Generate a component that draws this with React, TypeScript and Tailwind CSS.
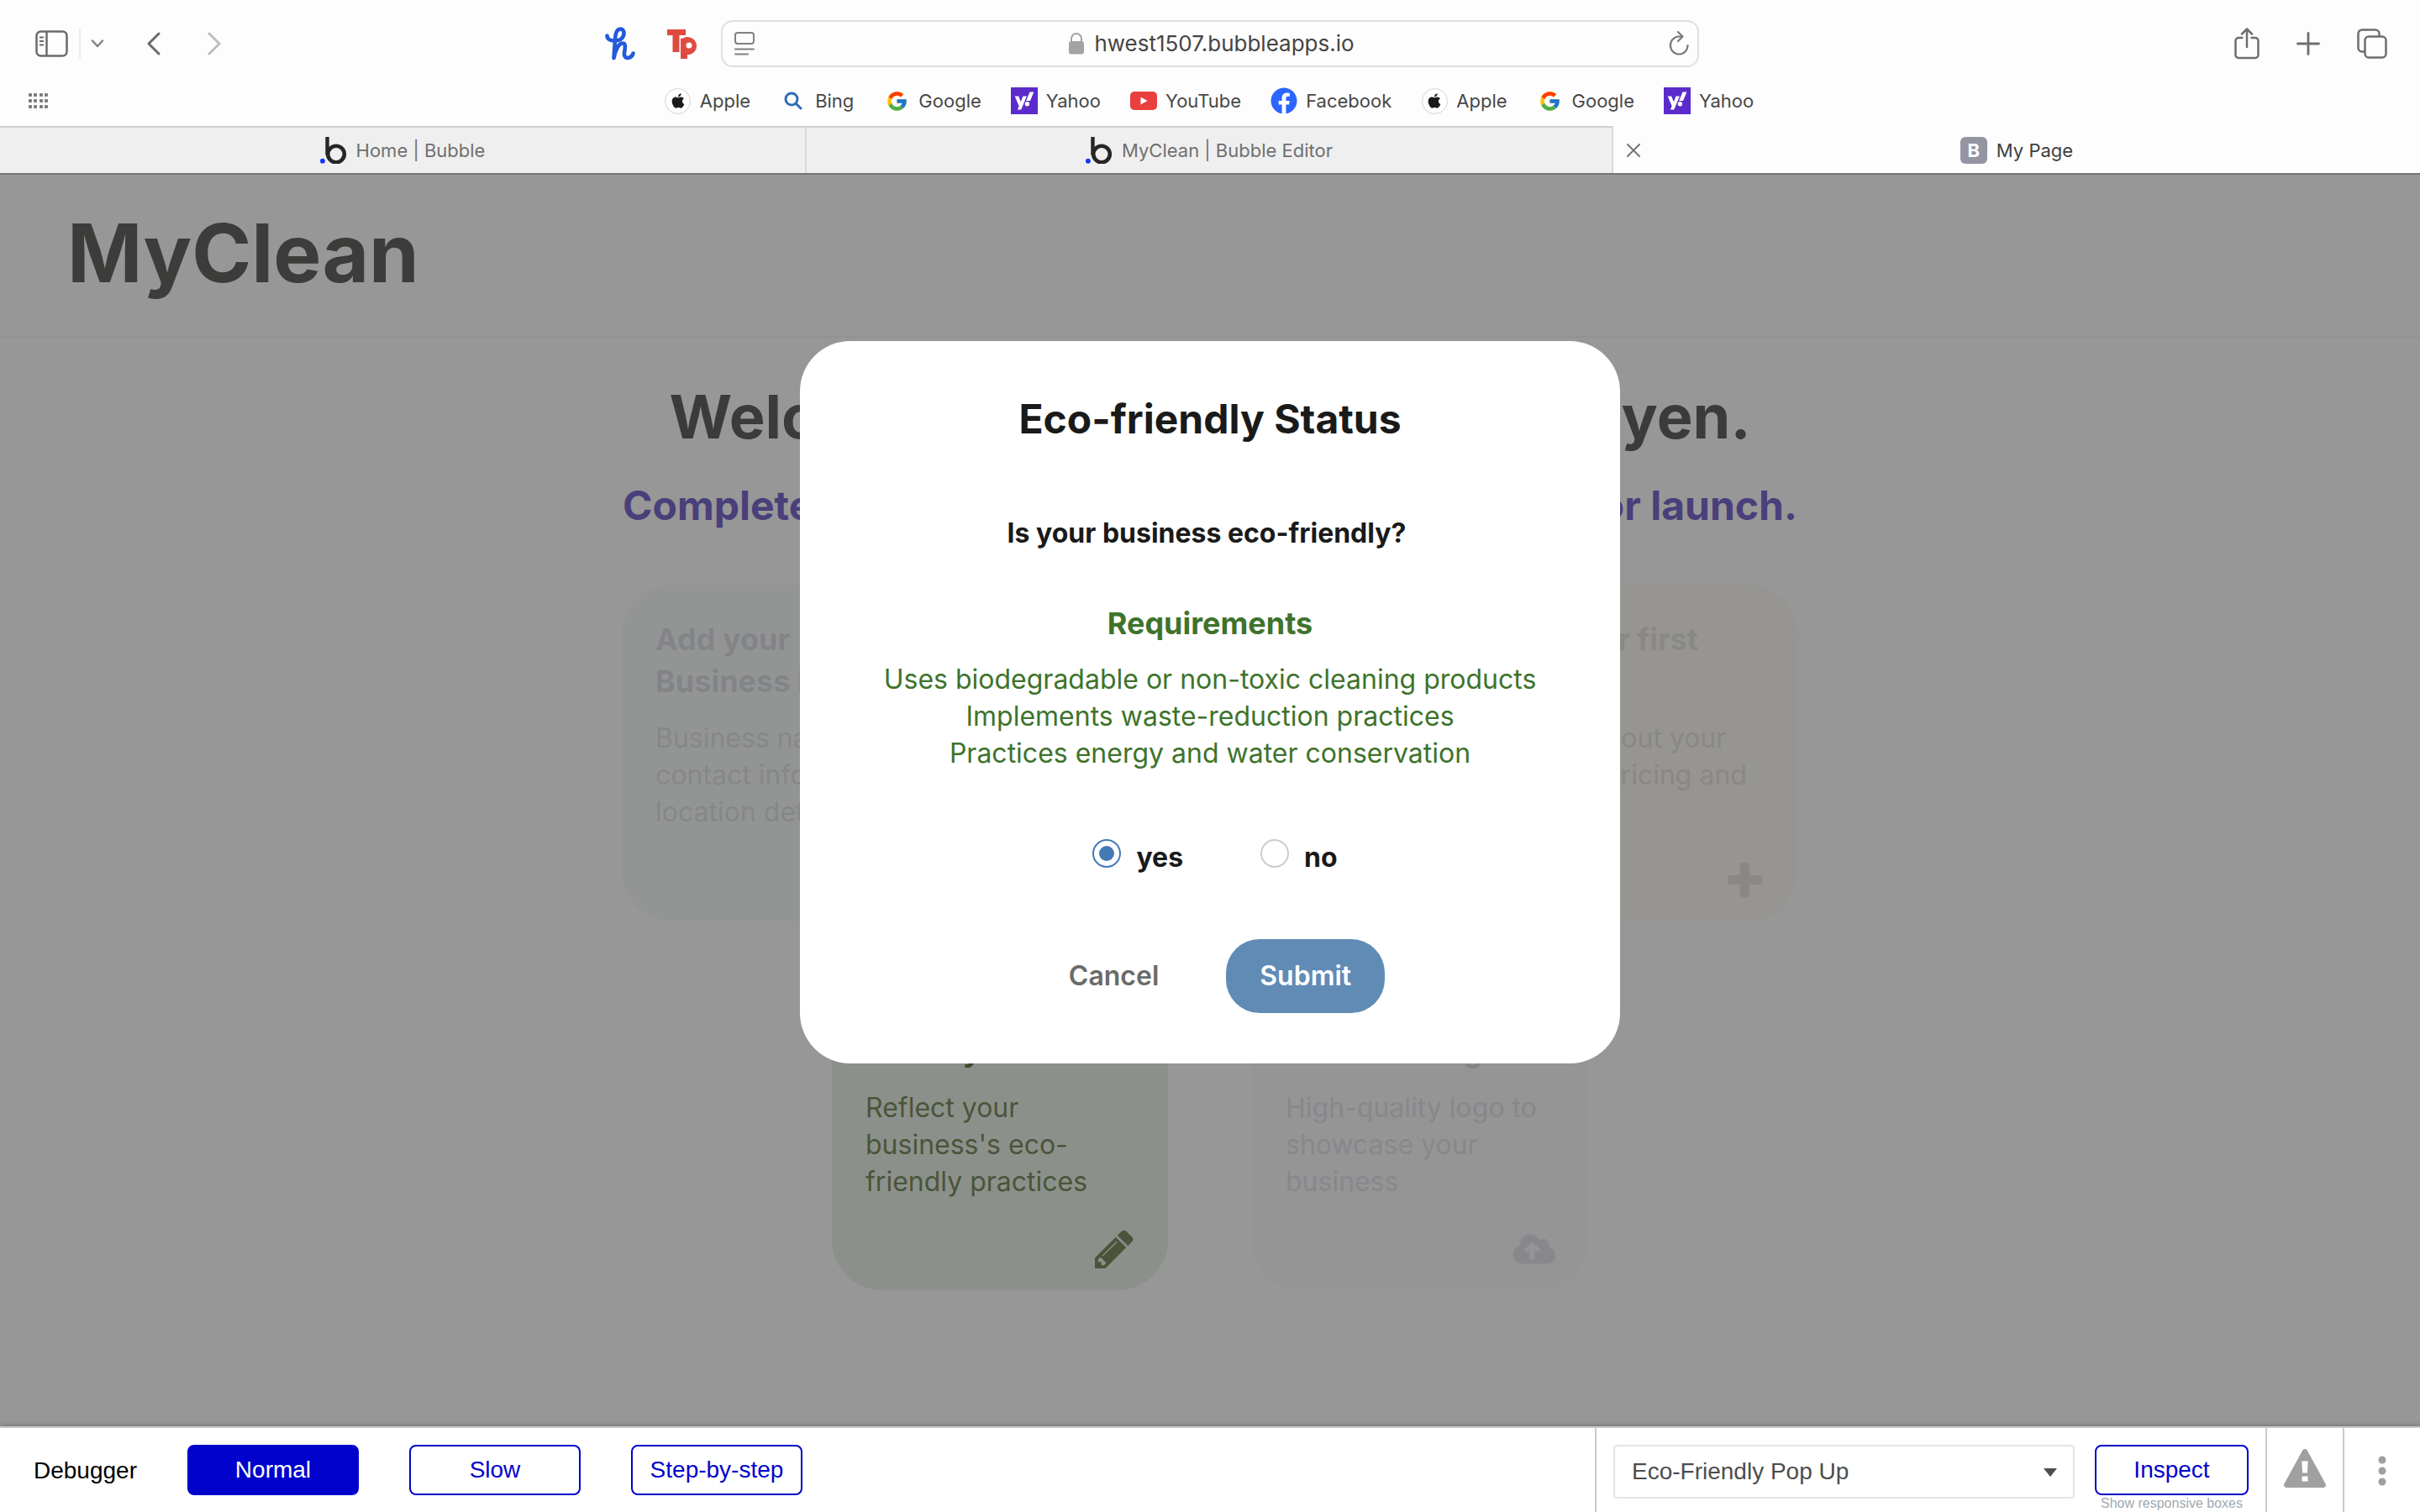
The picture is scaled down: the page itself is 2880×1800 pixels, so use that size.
import { useState, type ReactNode } from "react";
import { FaApple, FaFacebook, FaYahoo } from "react-icons/fa";
import { FcGoogle } from "react-icons/fc";

const ui = "font-['Inter',sans-serif]";
const helvetica = "font-['Liberation_Sans',Arial,sans-serif]";

function SidebarIcon() {
  return (
    <svg width="40" height="32" viewBox="0 0 40 32" fill="none" stroke="#6b6b6b" strokeWidth="2.500">
      <rect x="1.500" y="1.500" width="36" height="29" rx="5" />
      <path d="M13.500 1.500v29" />
      <path d="M5 8.500h5M5 13h5M5 17.500h5" strokeWidth="2" />
    </svg>
  );
}

function HoneyIcon() {
  return (
    <svg width="36" height="40" viewBox="0 0 36 40" fill="none" stroke="#2459dc" strokeWidth="4.600" strokeLinecap="round" strokeLinejoin="round">
      <path d="M2.500 10.500C2.500 14 6 16.500 11 16.500C18.500 16.500 22.500 12.500 22.500 7.500C22.500 4.500 21 2.500 18.500 2.500C13.500 2.500 12.300 9 12 15L10.500 37C12.500 27 16.500 19.500 21 19.500C26.500 19.500 22.500 29 23 33.500C23.500 38.500 31.500 38 33.500 31.500" />
    </svg>
  );
}

function TpIcon() {
  return (
    <svg width="36" height="36" viewBox="0 0 36 36">
      <g fill="#df4b41">
        <path d="M0 1h22v7h-7.500v20h-8V8H0z" />
        <path fillRule="evenodd" d="M17 12l6-2c7 0 12 4.500 12 10.500s-4 10-9.500 10.500H24v5h-8V12zM26 16.500a3.500 3.500 0 1 0 0 7a3.500 3.500 0 1 0 0-7z" />
      </g>
    </svg>
  );
}

function ReaderIcon() {
  return (
    <svg width="24" height="28" viewBox="0 0 24 28" fill="none" stroke="#808080" strokeWidth="2" strokeLinecap="round">
      <rect x="1" y="1" width="22" height="13" rx="3" />
      <path d="M1 20.500h22M1 26.500h15" />
    </svg>
  );
}

function LockIcon() {
  return (
    <svg width="18" height="26" viewBox="0 0 18 26">
      <rect x="0" y="10" width="18" height="15.500" rx="3" fill="#a3a3a3" />
      <path d="M3 11V7a6 6 0 0 1 12 0v4" fill="none" stroke="#a3a3a3" strokeWidth="2" />
    </svg>
  );
}

function ReloadIcon() {
  return (
    <svg width="24" height="30" viewBox="0 0 24 30" fill="none" stroke="#7a7a7a" strokeWidth="2.200" strokeLinecap="round" strokeLinejoin="round">
      <path d="M22.500 17a10.300 10.500 0 1 1-10.300-10.500h4" />
      <path d="M11 1l5.500 5.500l-5.500 5.500" />
    </svg>
  );
}

function ShareIcon() {
  return (
    <svg width="30" height="38" viewBox="0 0 30 38" fill="none" stroke="#6e6e6e" strokeWidth="2.500" strokeLinecap="round" strokeLinejoin="round">
      <path d="M9.500 12H5a3.500 3.500 0 0 0-3.500 3.500v17A3.500 3.500 0 0 0 5 36h20a3.500 3.500 0 0 0 3.500-3.500v-17A3.500 3.500 0 0 0 25 12h-4.500" />
      <path d="M15 23V2M9 7.500L15 1.500l6 6" />
    </svg>
  );
}

function TabsIcon() {
  return (
    <svg width="36" height="36" viewBox="0 0 36 36" fill="none" stroke="#6e6e6e" strokeWidth="2.500" strokeLinejoin="round">
      <path d="M9 27.500H6a4.500 4.500 0 0 1-4.500-4.500V6A4.500 4.500 0 0 1 6 1.500h16A4.500 4.500 0 0 1 26.500 6v3" />
      <rect x="9.500" y="9.500" width="25" height="25" rx="4.500" />
    </svg>
  );
}

function BubbleIcon() {
  return (
    <svg width="32" height="32" viewBox="0 0 32 32">
      <path d="M8.500 0v21.500" stroke="#262626" strokeWidth="4.400" fill="none" />
      <circle cx="19" cy="20.500" r="9.800" fill="none" stroke="#262626" strokeWidth="4.600" />
      <circle cx="2.900" cy="28.700" r="2.900" fill="#1034ff" />
    </svg>
  );
}

function BingIcon() {
  return (
    <svg width="22" height="22" viewBox="0 0 22 22" fill="none" stroke="#2f6db8" strokeWidth="3" strokeLinecap="round">
      <circle cx="9" cy="9" r="7" />
      <path d="M14 14l6 6" />
    </svg>
  );
}

function YouTubeIcon() {
  return (
    <svg width="32" height="22" viewBox="0 0 32 22">
      <rect width="32" height="22" rx="5" fill="#ea3f3f" />
      <path d="M12.500 6.500v9l8-4.500z" fill="#fff" />
    </svg>
  );
}

const bookmarkIcons: Record<string, ReactNode> = {
  Apple: (
    <span className="flex size-[31px] items-center justify-center rounded-full border border-[#d4d4d4] bg-white">
      <FaApple className="size-5 text-[#1a1a1a]" />
    </span>
  ),
  Bing: <BingIcon />,
  Google: <FcGoogle className="size-[27px]" />,
  Yahoo: (
    <span className="flex size-8 items-center justify-center bg-[#5b2bcb]">
      <FaYahoo className="size-6 text-white" />
    </span>
  ),
  YouTube: <YouTubeIcon />,
  Facebook: <FaFacebook className="size-8 text-[#2a66ff]" />,
};

const bookmarks = ["Apple", "Bing", "Google", "Yahoo", "YouTube", "Facebook", "Apple", "Google", "Yahoo"];

function BrowserChrome() {
  return (
    <header className={`bg-[#fdfdfd] ${ui}`}>
      <div className="grid grid-cols-[1fr_1164px_1fr] pt-6">
        <div className="flex items-center pr-7 pl-[42px]">
          <button aria-label="Show sidebar"><SidebarIcon /></button>
          <span className="ml-3 h-9 w-0.5 bg-[#ececec]" />
          <button aria-label="Tab groups" className="ml-3">
            <svg width="16" height="10" viewBox="0 0 16 10" fill="none" stroke="#828282" strokeWidth="2.500" strokeLinecap="round" strokeLinejoin="round">
              <path d="M2 1.500l6 6.500l6-6.500" />
            </svg>
          </button>
          <button aria-label="Back" className="ml-[50px]">
            <svg width="18" height="28" viewBox="0 0 18 28" fill="none" stroke="#6b6b6b" strokeWidth="3" strokeLinecap="round" strokeLinejoin="round">
              <path d="M15 2L3 14l12 12" />
            </svg>
          </button>
          <button aria-label="Forward" className="ml-[54px]">
            <svg width="18" height="28" viewBox="0 0 18 28" fill="none" stroke="#bdbdbd" strokeWidth="3" strokeLinecap="round" strokeLinejoin="round">
              <path d="M3 2l12 12L3 26" />
            </svg>
          </button>
          <div className="ml-auto flex items-center gap-[38px]">
            <button aria-label="Honey"><HoneyIcon /></button>
            <button aria-label="Tp extension"><TpIcon /></button>
          </div>
        </div>
        <div className="flex h-14 items-center justify-between rounded-[14px] border-2 border-[#e0e0e0] pr-2.5 pl-3.5">
          <button aria-label="Reader"><ReaderIcon /></button>
          <div className="flex items-center gap-3">
            <LockIcon />
            <input
              aria-label="Address"
              defaultValue="hwest1507.bubbleapps.io"
              className="field-sizing-content bg-transparent text-[26px] leading-8 text-[#454545] outline-none"
            />
          </div>
          <button aria-label="Reload"><ReloadIcon /></button>
        </div>
        <div className="flex items-center justify-end gap-11 pr-[39px]">
          <button aria-label="Share"><ShareIcon /></button>
          <button aria-label="New tab">
            <svg width="28" height="28" viewBox="0 0 28 28" stroke="#6e6e6e" strokeWidth="2.800" strokeLinecap="round">
              <path d="M14 1.500v25M1.500 14h25" />
            </svg>
          </button>
          <button aria-label="Show tabs"><TabsIcon /></button>
        </div>
      </div>
      <nav className="grid grid-cols-[1fr_auto_1fr] items-center pr-9 pl-[34px] pt-6 pb-3.5">
        <button aria-label="Favorites" className="justify-self-start">
          <svg width="24" height="18" viewBox="0 0 24 18" fill="#7d7d7d">
            {[0, 7, 14].map((y) => [0, 6, 13, 19].map((x) => <rect key={`${x}-${y}`} x={x} y={y} width="4" height="4" rx="1" />))}
          </svg>
        </button>
        <div className="flex items-center gap-[35px]">
          {bookmarks.map((name, i) => (
            <a key={i} href="#" className="flex items-center gap-2.5 text-[22px] leading-8 text-[#474747]">
              <span className="flex size-8 items-center justify-center">{bookmarkIcons[name]}</span>
              {name}
            </a>
          ))}
        </div>
      </nav>
      <div className="grid h-14 grid-cols-3 text-[22px] leading-8">
        <button className="flex items-center justify-center gap-[11px] border-t-2 border-r-2 border-t-[#cfcfcf] border-r-[#dadada] bg-[#efefef] text-[#707070]">
          <BubbleIcon />
          Home | Bubble
        </button>
        <button className="flex items-center justify-center gap-[11px] border-t-2 border-r-2 border-t-[#cfcfcf] border-r-[#dadada] bg-[#efefef] text-[#707070]">
          <BubbleIcon />
          MyClean | Bubble Editor
        </button>
        <div className="grid grid-cols-[1fr_auto_1fr] items-center border-t-2 border-[#fdfdfd] px-4 text-[#404040]">
          <button aria-label="Close tab" className="justify-self-start">
            <svg width="16" height="16" viewBox="0 0 16 16" stroke="#757575" strokeWidth="2" strokeLinecap="round">
              <path d="M1 1l14 14M15 1L1 15" />
            </svg>
          </button>
          <button className="flex items-center gap-[11px]">
            <span className="flex size-8 items-center justify-center rounded-md bg-[#9495a2] text-[22px] font-bold text-white">B</span>
            My Page
          </button>
        </div>
      </div>
    </header>
  );
}

function PlusIcon() {
  return (
    <svg width="41" height="41" viewBox="0 0 1408 1408" fill="currentColor">
      <path d="M1408 608v192q0 40-28 68t-68 28h-416v416q0 40-28 68t-68 28h-192q-40 0-68-28t-28-68v-416h-416q-40 0-68-28t-28-68v-192q0-40 28-68t68-28h416v-416q0-40 28-68t68-28h192q40 0 68 28t28 68v416h416q40 0 68 28t28 68z" />
    </svg>
  );
}

function PencilIcon() {
  return (
    <svg width="46" height="46" viewBox="0 0 1536 1536" fill="currentColor">
      <path d="M363 1408l91-91-235-235-91 91v107h128v128h107zM886 480q0-22-22-22-10 0-17 7l-542 542q-7 7-7 17 0 22 22 22 10 0 17-7l542-542q7-7 7-17zM832 288l416 416-832 832h-416v-416zM1515 384q0 53-37 90l-166 166-416-416 166-165q36-38 90-38 53 0 91 38l235 234q37 39 37 91z" />
    </svg>
  );
}

function CloudUploadIcon() {
  return (
    <svg width="52" height="40" viewBox="0 0 640 512" fill="currentColor" className="shrink-0">
      <path d="M537.600 226.600c4.100-10.700 6.400-22.400 6.400-34.600 0-53-43-96-96-96-19.700 0-38.100 6-53.300 16.200C367 64.200 315.300 32 256 32c-88.400 0-160 71.600-160 160 0 2.700.1 5.400.2 8.100C40.200 219.800 0 273.200 0 336c0 79.500 64.500 144 144 144h368c70.700 0 128-57.300 128-128 0-61.900-44-113.600-102.400-125.400zM393.400 288H328v112c0 8.800-7.200 16-16 16h-48c-8.800 0-16-7.200-16-16V288h-65.400c-14.300 0-21.400-17.200-11.300-27.300l105.400-105.400c6.200-6.200 16.400-6.200 22.600 0l105.400 105.400c10.100 10.100 2.900 27.300-11.300 27.300z" />
    </svg>
  );
}

type CardProps = { title: string; body: string; icon: ReactNode; tone: string; titleTone: string };

function Card({ title, body, icon, tone, titleTone }: CardProps) {
  return (
    <article className={`flex h-[400px] w-[400px] flex-col rounded-[60px] px-10 pt-10 pb-[25px] ${tone}`}>
      <h3 className={`text-4xl leading-[50px] font-bold whitespace-pre-line ${titleTone}`}>{title}</h3>
      <p className="mt-[21px] text-[32px] leading-[44px] whitespace-pre-line">{body}</p>
      <div className="mt-auto flex size-12 items-center justify-center self-end">{icon}</div>
    </article>
  );
}

function Dashboard() {
  return (
    <div className={ui}>
      <div className="border-b-2 border-[#929292] px-20 pt-[35px] pb-[41px]">
        <div className="text-8xl leading-[116px] font-bold text-[#3c3d3b]">MyClean</div>
      </div>
      <div className="flex flex-col items-center pt-[50px]">
        <h1 className="text-7xl leading-[88px] font-bold whitespace-nowrap text-[#3b3b3b]">Welcome to MyClean, Anna Nguyen.</h1>
        <h2 className="mt-8 text-5xl leading-[60px] font-bold whitespace-nowrap text-[#493f7a]">
          Complete these steps to get your services ready for launch.
        </h2>
        <div className="mt-16 flex gap-[100px]">
          <Card title={"Add your\nBusiness Info"} body={"Business name,\ncontact info and\nlocation details"} icon={<PencilIcon />} tone="bg-[#939595] text-[#868789]" titleTone="text-[#838488]" />
          <Card title={"Choose your\nHours"} body={"Days and times\nyou are open"} icon={<PlusIcon />} tone="bg-[#949494] text-[#868688]" titleTone="text-[#838488]" />
          <Card title={"Add your first\nService"} body={"Details about your\nservice, pricing and\nlength"} icon={<PlusIcon />} tone="bg-[#979592] text-[#898883]" titleTone="text-[#898883]" />
        </div>
        <div className="mt-10 flex gap-[100px]">
          <Card title={"Add your Eco-\nfriendly Status"} body={"Reflect your\nbusiness's eco-\nfriendly practices"} icon={<PencilIcon />} tone="bg-[#8b918a] text-[#4b543a]" titleTone="text-[#424b2c]" />
          <Card title={"Upload your\nBusiness Logo"} body={"High-quality logo to\nshowcase your\nbusiness"} icon={<CloudUploadIcon />} tone="bg-[#959595] text-[#88878c]" titleTone="text-[#84838a]" />
        </div>
      </div>
    </div>
  );
}

function EcoDialog() {
  const [answer, setAnswer] = useState("yes");
  return (
    <div
      role="dialog"
      aria-modal="true"
      aria-labelledby="eco-title"
      className={`flex w-[976px] flex-col items-center rounded-[60px] bg-white px-10 pt-[63px] pb-[60px] text-[32px] leading-[44px] ${ui}`}
    >
      <h2 id="eco-title" className="text-5xl leading-[60px] font-bold text-[#1a1a1a]">Eco-friendly Status</h2>
      <p id="eco-question" className="mt-[84px] pr-2 font-bold text-[#1a1a1a]">Is your business eco-friendly?</p>
      <h3 className="mt-[60px] text-4xl leading-[50px] font-bold text-[#3e732b]">Requirements</h3>
      <ul className="mt-5 text-center text-[#3e732b]">
        <li>Uses biodegradable or non-toxic cleaning products</li>
        <li>Implements waste-reduction practices</li>
        <li>Practices energy and water conservation</li>
      </ul>
      <div role="radiogroup" aria-labelledby="eco-question" className="mt-20 flex gap-[92px] pl-3">
        {["yes", "no"].map((value) => (
          <label key={value} className="flex items-start gap-[18px] font-bold text-[#1a1a1a]">
            <input
              type="radio"
              name="eco"
              value={value}
              checked={answer === value}
              onChange={() => setAnswer(value)}
              className="size-[34px] appearance-none rounded-full border-2 border-[#cccccc] bg-clip-content p-1.5 checked:border-[#457ab4] checked:bg-[#457ab4]"
            />
            {value}
          </label>
        ))}
      </div>
      <div className="mt-[75px] flex gap-10 font-semibold">
        <button className="h-[88px] px-10 text-[#6a6b69]">Cancel</button>
        <button className="h-[88px] rounded-[40px] bg-[#608bb5] px-10 text-white">Submit</button>
      </div>
    </div>
  );
}

const debugModes = ["Normal", "Slow", "Step-by-step"];

function DebuggerBar() {
  const [mode, setMode] = useState("Normal");
  return (
    <footer className={`relative flex h-[102px] shrink-0 border-t-2 border-[#cbcbcb] bg-white text-[28px] leading-8 shadow-[0_0_6px_rgba(0,0,0,0.3)] ${helvetica}`}>
      <div className="flex flex-1 items-start gap-[60px] pt-5 pl-10">
        <span className="leading-[62px] text-black">Debugger</span>
        {debugModes.map((name) => (
          <button
            key={name}
            aria-pressed={mode === name}
            onClick={() => setMode(name)}
            className="h-[60px] w-[204px] rounded-lg border-2 border-[#0202cd] text-[#0202cd] aria-pressed:bg-[#0202cd] aria-pressed:text-white"
          >
            {name}
          </button>
        ))}
      </div>
      <div className="flex items-start gap-6 border-l-2 border-[#cbcbcb] px-5 pt-5">
        <div className="relative">
          <select aria-label="Element" className="h-16 w-[549px] appearance-none rounded border-2 border-[#e5e5e5] bg-white pr-12 pl-5 text-[#4d4d4d]">
            <option>Eco-Friendly Pop Up</option>
          </select>
          <svg width="18" height="10" viewBox="0 0 18 10" className="pointer-events-none absolute top-7 right-5">
            <path d="M1 0h16l-8 10z" fill="#4d4d4d" />
          </svg>
        </div>
        <div className="flex flex-col items-center">
          <button className="h-[60px] w-[183px] rounded-lg border-2 border-[#0202cd] text-[#0202cd]">Inspect</button>
          <a href="#" className="text-base leading-5 text-[#a0a9b0]">Show responsive boxes</a>
        </div>
      </div>
      <button aria-label="Issues" className="flex w-[92px] justify-center border-l-2 border-[#cbcbcb] pt-[25px]">
        <svg width="50" height="46" viewBox="0 0 50 46" fill="#a0a0a0">
          <path fillRule="evenodd" d="M22.300 1.600a3 3 0 0 1 5.400 0L49.600 41.500a3 3 0 0 1-2.700 4.500H3.100a3 3 0 0 1-2.700-4.500zM21.300 14.500l.8 14h5.800l.8-14zM21.500 32.500v6h7v-6z" />
        </svg>
      </button>
      <button aria-label="More" className="flex w-[92px] justify-center border-l-2 border-[#cbcbcb] pt-[33px]">
        <svg width="10" height="36" viewBox="0 0 10 36" fill="#a0a0a0">
          <circle cx="5" cy="5" r="4.500" />
          <circle cx="5" cy="18" r="4.500" />
          <circle cx="5" cy="31" r="4.500" />
        </svg>
      </button>
    </footer>
  );
}

export default function App() {
  return (
    <div className="flex min-h-screen flex-col">
      <BrowserChrome />
      <main className="relative flex-1 border-t-2 border-[#747674] bg-[#979797]">
        <Dashboard />
        <div className="absolute inset-0 flex items-start justify-center pt-[198px]">
          <EcoDialog />
        </div>
      </main>
      <DebuggerBar />
    </div>
  );
}
